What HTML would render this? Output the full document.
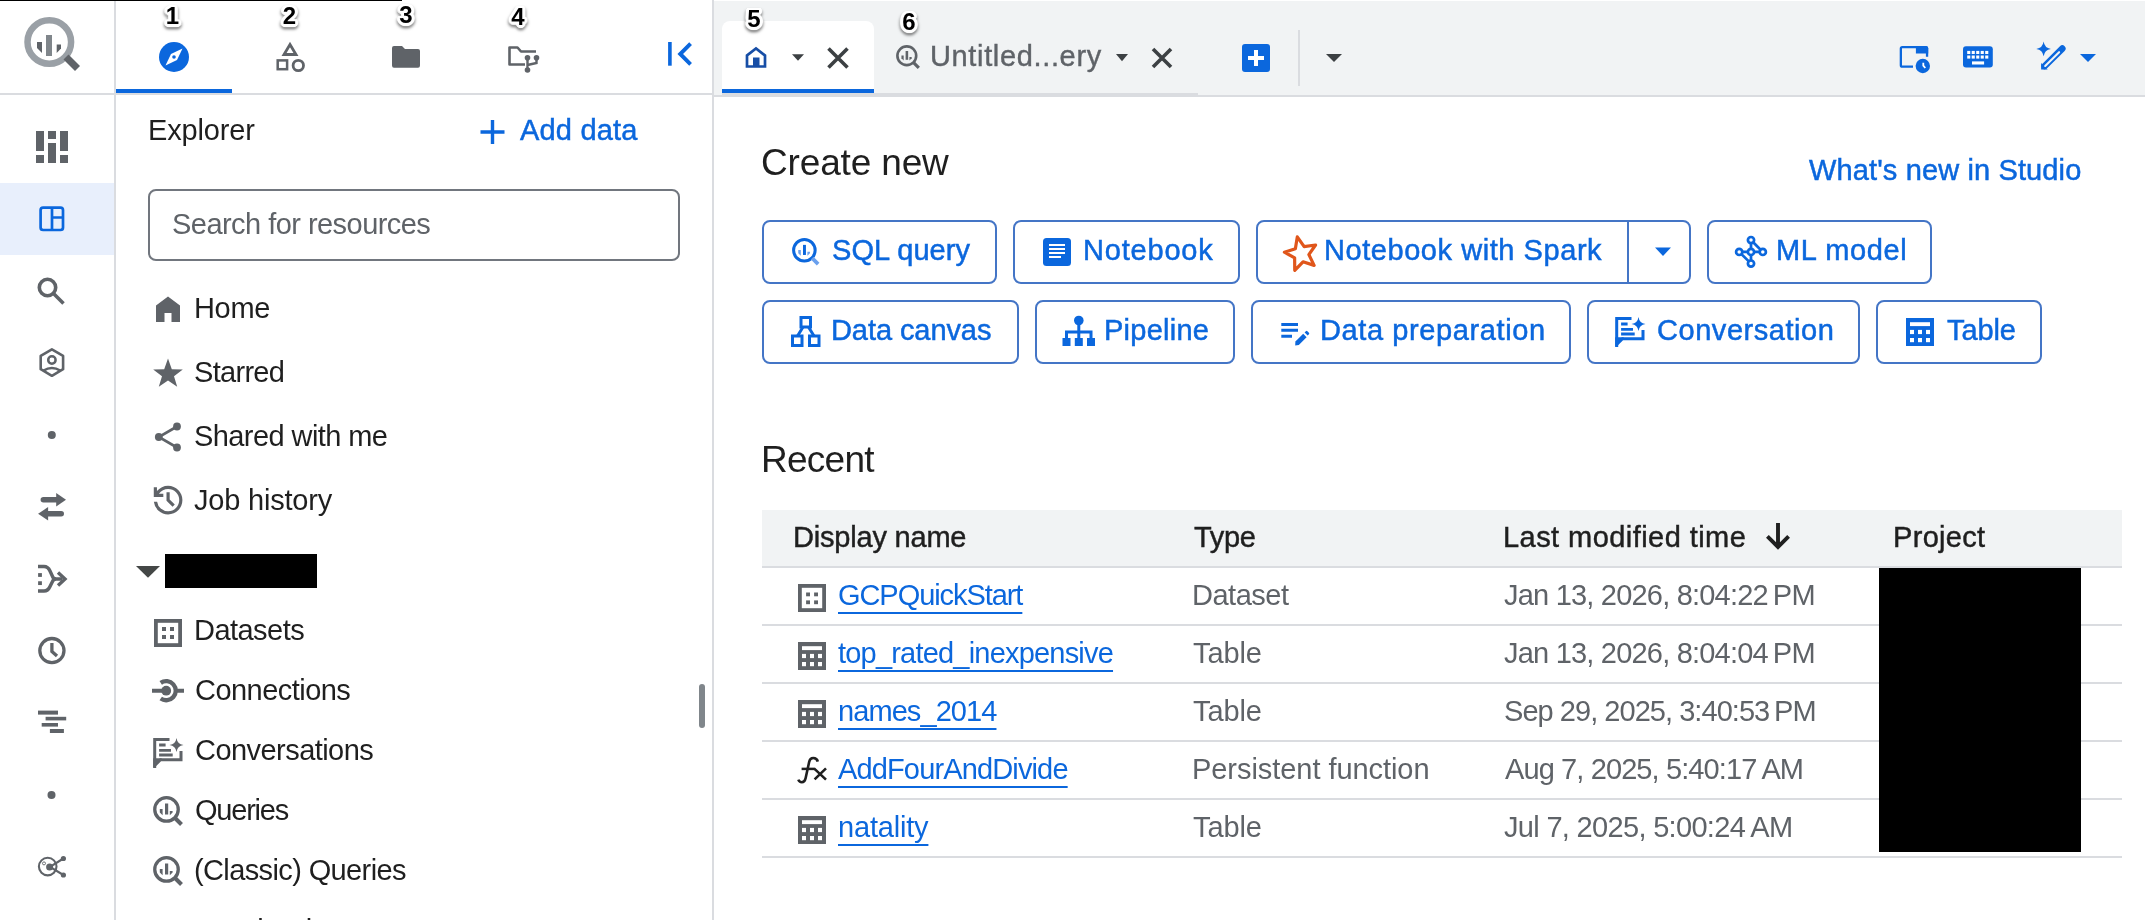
<!DOCTYPE html>
<html><head><meta charset="utf-8"><style>
html,body{margin:0;padding:0;background:#fff;width:2145px;height:920px;overflow:hidden;position:relative}
body{font-family:"Liberation Sans", sans-serif}
.t{position:absolute;white-space:nowrap;line-height:1;will-change:transform}
svg{overflow:visible}
.num{position:absolute;width:30px;text-align:center;font:bold 24px/1 "Liberation Sans", sans-serif;color:#000;
text-shadow:2.5px 0 0 #fff,-2.5px 0 0 #fff,0 2.5px 0 #fff,0 -2.5px 0 #fff,2px 2px 0 #fff,-2px 2px 0 #fff,2px -2px 0 #fff,-2px -2px 0 #fff,3px 1px 1px #fff,-3px 1px 1px #fff,1px 3px 1px #fff,-1px 3px 1px #fff,3px -1px 1px #fff,-3px -1px 1px #fff;
filter:drop-shadow(0 2.5px 1.5px rgba(0,0,0,.55))}
</style></head><body>
<div style="position:absolute;left:114px;top:0px;width:2px;height:920px;background:#dadce0"></div>
<div style="position:absolute;left:0px;top:93px;width:114px;height:2px;background:#dadce0"></div>
<div style="position:absolute;left:116px;top:93px;width:596px;height:2px;background:#dadce0"></div>
<div style="position:absolute;left:0px;top:0px;width:402px;height:1px;background:#000"></div>
<svg style="position:absolute;left:20px;top:13px;" width="64" height="64" viewBox="0 0 64 64">
<circle cx="29.3" cy="29" r="21.8" fill="none" stroke="#9aa0a6" stroke-width="6.5"/>
<path d="M17 29 h5 v11 l-5 -5 z" fill="#5f6368"/>
<rect x="26" y="22" width="6" height="21" fill="#80868b"/>
<path d="M36.7 31.6 h4.3 v4 l-4.3 4.5 z" fill="#5f6368"/>
<path d="M43.5 46.5 l5 -5 l11.5 11.5 l-5 5 z" fill="#5f6368"/>
</svg>
<svg style="position:absolute;left:36px;top:131px;" width="32" height="32" viewBox="0 0 32 32">
<rect x="0" y="0" width="8" height="20" fill="#5f6368"/>
<rect x="0" y="24" width="8" height="8" fill="#5f6368"/>
<rect x="12" y="0" width="8" height="8" fill="#5f6368"/>
<rect x="12" y="12" width="8" height="20" fill="#5f6368"/>
<rect x="24" y="0" width="8" height="20" fill="#5f6368"/>
<rect x="24" y="24" width="8" height="8" fill="#5f6368"/>
</svg>
<div style="position:absolute;left:0px;top:183px;width:114px;height:72px;background:#e8effc"></div>
<svg style="position:absolute;left:38px;top:205px;" width="28" height="28" viewBox="0 0 28 28">
<rect x="2.6" y="2.6" width="22.4" height="22.4" rx="2.5" fill="none" stroke="#0b67dd" stroke-width="2.7"/>
<path d="M14 2.6 V25 M14 12.5 H25" stroke="#0b67dd" stroke-width="2.7"/>
</svg>
<svg style="position:absolute;left:36px;top:276px;" width="30" height="30" viewBox="0 0 30 30">
<circle cx="11.5" cy="11.5" r="8.2" fill="none" stroke="#5f6368" stroke-width="3.6"/>
<path d="M17.5 17.5 L27.5 27.5" stroke="#5f6368" stroke-width="3.6"/>
</svg>
<svg style="position:absolute;left:38px;top:347px;" width="28" height="32" viewBox="0 0 28 32">
<path d="M13.9 2.4 L25.1 8.9 V22.2 L13.9 28.8 L2.7 22.2 V8.9 Z" fill="none" stroke="#5f6368" stroke-width="2.6" stroke-linejoin="round"/>
<circle cx="13.9" cy="13" r="3.7" fill="none" stroke="#5f6368" stroke-width="2.5"/>
<path d="M5.5 23.6 Q13.9 18.6 22.3 23.6" fill="none" stroke="#5f6368" stroke-width="2.5"/>
</svg>
<svg style="position:absolute;left:47px;top:430px;" width="10" height="10" viewBox="0 0 10 10"><circle cx="4.8" cy="5" r="4" fill="#5f6368"/></svg>
<svg style="position:absolute;left:47px;top:790px;" width="10" height="10" viewBox="0 0 10 10"><circle cx="4.5" cy="5" r="4" fill="#5f6368"/></svg>
<svg style="position:absolute;left:36px;top:490px;" width="32" height="32" viewBox="0 0 32 32">
<path d="M7.4 9.75 H21" stroke="#5f6368" stroke-width="5.6" stroke-linecap="round"/>
<path d="M20.2 3.1 L30 9.75 L20.2 16.4 Z" fill="#5f6368"/>
<path d="M11 23.75 H25.2" stroke="#5f6368" stroke-width="5.6" stroke-linecap="round"/>
<path d="M12.1 17.1 L2.1 23.75 L12.1 30.4 Z" fill="#5f6368"/>
</svg>
<svg style="position:absolute;left:36px;top:563px;" width="32" height="32" viewBox="0 0 32 32">
<path d="M2 3.5 H8 Q12 3.5 14 8 L17 14.5 Q18.5 16 20 16 H26" fill="none" stroke="#5f6368" stroke-width="3.4"/>
<path d="M2 28 H8 Q12 28 14 23.5 L17 17.5 Q18.5 16 20 16" fill="none" stroke="#5f6368" stroke-width="3.4"/>
<rect x="2.1" y="10.1" width="3.8" height="3.8" fill="#5f6368"/>
<rect x="2.1" y="18.25" width="3.8" height="3.8" fill="#5f6368"/>
<path d="M22 9.5 L29 16 L22 22.5" fill="none" stroke="#5f6368" stroke-width="3.4"/>
</svg>
<svg style="position:absolute;left:36px;top:635px;" width="32" height="32" viewBox="0 0 32 32">
<circle cx="15.9" cy="15.6" r="12.1" fill="none" stroke="#5f6368" stroke-width="3.3"/>
<path d="M15.9 8.1 V16.4 L21 21" fill="none" stroke="#5f6368" stroke-width="3.3"/>
</svg>
<svg style="position:absolute;left:36px;top:709px;" width="32" height="28" viewBox="0 0 32 28">
<rect x="2" y="1.6" width="20" height="4" fill="#5f6368"/>
<rect x="9.6" y="7.8" width="20.6" height="3.6" fill="#5f6368"/>
<rect x="5.7" y="14" width="16.3" height="3.6" fill="#5f6368"/>
<rect x="13.9" y="20" width="14" height="4" fill="#5f6368"/>
</svg>
<svg style="position:absolute;left:36px;top:853px;" width="32" height="28" viewBox="0 0 32 28">
<circle cx="11.7" cy="13.6" r="8.8" fill="none" stroke="#5f6368" stroke-width="2.1"/>
<circle cx="13.6" cy="13.9" r="3.5" fill="#5f6368"/>
<path d="M14 13.9 L27.4 5.5 M14 13.9 L27.4 22" stroke="#5f6368" stroke-width="2.2"/>
<circle cx="27.4" cy="5.5" r="2.6" fill="#5f6368"/>
<circle cx="27.4" cy="22" r="2.6" fill="#5f6368"/>
<circle cx="8" cy="10.4" r="1.5" fill="none" stroke="#5f6368" stroke-width="0.9"/>
</svg>
<div style="position:absolute;left:712px;top:0px;width:2px;height:920px;background:#dadce0"></div>
<div style="position:absolute;left:116px;top:89px;width:116px;height:4px;background:#0b67dd"></div>
<svg style="position:absolute;left:158px;top:41px;" width="32" height="32" viewBox="0 0 32 32">
<circle cx="16" cy="16" r="15" fill="#0b67dd"/>
<path d="M24.5 7.5 L13 13 L7.5 24.5 L19 19 Z" fill="#fff"/>
<circle cx="16" cy="16" r="1.8" fill="#0b67dd"/>
</svg>
<svg style="position:absolute;left:274px;top:40px;" width="32" height="34" viewBox="0 0 32 34">
<path d="M16 4.5 L22 14.5 H10 Z" fill="none" stroke="#5f6368" stroke-width="2.8" stroke-linejoin="miter"/>
<rect x="3.7" y="20.4" width="9.4" height="8.8" fill="none" stroke="#5f6368" stroke-width="2.5"/>
<circle cx="24.3" cy="25.5" r="5.2" fill="none" stroke="#5f6368" stroke-width="2.8"/>
</svg>
<svg style="position:absolute;left:390px;top:44px;" width="32" height="26" viewBox="0 0 32 26">
<path d="M2 4 Q2 2 4 2 H12 L15 5 H28 Q30 5 30 7 V21.5 Q30 23.7 28 23.7 H4 Q2 23.7 2 21.5 Z" fill="#5f6368"/>
</svg>
<svg style="position:absolute;left:506px;top:44px;" width="36" height="30" viewBox="0 0 36 30">
<path d="M19 20.5 H3.5 V3.5 H11.5 L15 7.5 H30" fill="none" stroke="#5f6368" stroke-width="2.6" stroke-linejoin="round"/>
<circle cx="21.5" cy="13.8" r="2.8" fill="#5f6368"/>
<circle cx="30.5" cy="13.8" r="2.8" fill="#5f6368"/>
<circle cx="21.5" cy="26" r="2.8" fill="#5f6368"/>
<path d="M21.5 14 V26 M30.5 14 V19 L21.5 21" fill="none" stroke="#5f6368" stroke-width="2.4"/>
</svg>
<svg style="position:absolute;left:664px;top:40px;" width="32" height="28" viewBox="0 0 32 28">
<rect x="4.1" y="2" width="3.6" height="23.7" fill="#0b67dd"/>
<path d="M26.6 3.6 L16.2 14 L26.6 24.4" fill="none" stroke="#0b67dd" stroke-width="3.9"/>
</svg>
<div class="t" style="left:148px;top:116.00px;font-size:29px;color:#1f1f1f;letter-spacing:-0.143px;font-weight:400;">Explorer</div>
<svg style="position:absolute;left:478px;top:118px;" width="30" height="28" viewBox="0 0 30 28"><path d="M14.5 2 V26 M2.5 14 H26.5" stroke="#0b67dd" stroke-width="3.4"/></svg>
<div class="t" style="left:520px;top:116.00px;font-size:29px;color:#0b67dd;letter-spacing:0.186px;font-weight:400;-webkit-text-stroke:0.5px #0b67dd">Add data</div>
<div style="position:absolute;left:148px;top:189px;width:532px;height:72px;box-sizing:border-box;border:2px solid #71767e;border-radius:8px"></div>
<div class="t" style="left:172px;top:210.30px;font-size:29px;color:#5f6368;letter-spacing:-0.542px;font-weight:400;">Search for resources</div>
<svg style="position:absolute;left:154px;top:294px;" width="28" height="30" viewBox="0 0 28 30"><path d="M2 28 V11.5 L14 2.5 L26 11.5 V28 H17.5 V19 H10.5 V28 Z" fill="#5f6368"/></svg>
<div class="t" style="left:193.5px;top:294.00px;font-size:29px;color:#1f1f1f;letter-spacing:-0.333px;font-weight:400;">Home</div>
<svg style="position:absolute;left:152px;top:357px;" width="32" height="32" viewBox="0 0 32 32"><path d="M16 1.5 L19.8 12.2 L30.8 12.4 L22 19.3 L25.2 29.8 L16 23.5 L6.8 29.8 L10 19.3 L1.2 12.4 L12.2 12.2 Z" fill="#5f6368"/></svg>
<div class="t" style="left:194.3px;top:358.00px;font-size:29px;color:#1f1f1f;letter-spacing:-0.700px;font-weight:400;">Starred</div>
<svg style="position:absolute;left:152px;top:420px;" width="32" height="34" viewBox="0 0 32 34">
<circle cx="25" cy="6.5" r="3.9" fill="#5f6368"/>
<circle cx="6.8" cy="17" r="3.9" fill="#5f6368"/>
<circle cx="25" cy="27.5" r="3.9" fill="#5f6368"/>
<path d="M25 6.5 L6.8 17 L25 27.5" fill="none" stroke="#5f6368" stroke-width="2.6"/>
</svg>
<div class="t" style="left:193.8px;top:422.20px;font-size:29px;color:#1f1f1f;letter-spacing:-0.577px;font-weight:400;">Shared with me</div>
<svg style="position:absolute;left:148.9px;top:481.3px;" width="38.2" height="38.2" viewBox="0 -960 960 960"><path fill="#5f6368" d="M480-120q-138 0-240.5-91.5T122-440h82q14 104 92.5 172T480-200q117 0 198.5-81.5T760-480q0-117-81.5-198.5T480-760q-69 0-129 32t-101 88h110v80H120v-240h80v94q51-64 124.5-99T480-840q75 0 140.5 28.5t114 77q48.5 48.5 77 114T840-480q0 75-28.5 140.5t-77 114q-48.5 48.5-114 77T480-120Zm112-192L440-464v-216h80v184l128 128-56 56Z"/></svg>
<div class="t" style="left:193.8px;top:486.20px;font-size:29px;color:#1f1f1f;letter-spacing:-0.200px;font-weight:400;">Job history</div>
<svg style="position:absolute;left:136px;top:562px;" width="26" height="20" viewBox="0 0 26 20"><path d="M0 4.1 H24 L12 15.8 Z" fill="#444746"/></svg>
<div style="position:absolute;left:165px;top:554px;width:152px;height:34px;background:#000"></div>
<svg style="position:absolute;left:152px;top:617px;" width="32" height="32" viewBox="0 0 32 32">
<rect x="3.9" y="3.9" width="24.2" height="24.2" fill="none" stroke="#5f6368" stroke-width="3.8"/>
<rect x="10" y="10" width="4" height="4" fill="#5f6368"/>
<rect x="18" y="10" width="4" height="4" fill="#5f6368"/>
<rect x="10" y="18" width="4" height="4" fill="#5f6368"/>
<rect x="18" y="18" width="4" height="4" fill="#5f6368"/>
</svg>
<div class="t" style="left:193.6px;top:616.10px;font-size:29px;color:#1f1f1f;letter-spacing:-0.543px;font-weight:400;">Datasets</div>
<svg style="position:absolute;left:150px;top:676px;" width="36" height="30" viewBox="0 0 36 30">
<path d="M2 14.7 H12 M25 14.7 H34" stroke="#5f6368" stroke-width="4"/>
<circle cx="16.2" cy="14.7" r="4.9" fill="#5f6368"/>
<path d="M10.72 6.88 A9.55 9.55 0 1 1 10.72 22.52" fill="none" stroke="#5f6368" stroke-width="4.3"/>
</svg>
<div class="t" style="left:194.6px;top:676.20px;font-size:29px;color:#1f1f1f;letter-spacing:-0.540px;font-weight:400;">Connections</div>
<svg style="position:absolute;left:152px;top:736px;" width="34" height="34" viewBox="0 0 34 34">
<path d="M2.7 32 V3.5 H17.5" fill="none" stroke="#5f6368" stroke-width="3"/>
<path d="M2.7 29.5 L8.5 23.7 H29 V15" fill="none" stroke="#5f6368" stroke-width="3"/>
<path d="M1.2 32 V22.2 H10 Z" fill="#5f6368"/>
<path d="M7.1 9 H13.6 M7.1 14.4 H19 M7.1 19 H20.7" stroke="#5f6368" stroke-width="2.8"/>
<path d="M24.5 2 Q25.3 8.2 31.5 9 Q25.3 9.8 24.5 16 Q23.7 9.8 17.5 9 Q23.7 8.2 24.5 2 Z" fill="#5f6368"/>
</svg>
<div class="t" style="left:194.6px;top:735.50px;font-size:29px;color:#1f1f1f;letter-spacing:-0.550px;font-weight:400;">Conversations</div>
<svg style="position:absolute;left:153px;top:796px;" width="30" height="30" viewBox="0 0 30 30">
<circle cx="13.5" cy="13.4" r="11.75" fill="none" stroke="#5f6368" stroke-width="3.3"/>
<rect x="12" y="7.5" width="3.2" height="11" fill="#5f6368"/>
<path d="M6.8 13 h2.8 v6.3 l-2.8 -2.8 z" fill="#5f6368"/>
<path d="M16.8 15 h2.8 v1.5 l-2.8 2.8 z" fill="#5f6368"/>
<path d="M22 22 L28.5 28.5" stroke="#5f6368" stroke-width="4"/>
</svg>
<div class="t" style="left:194.5px;top:795.80px;font-size:29px;color:#1f1f1f;letter-spacing:-1.217px;font-weight:400;">Queries</div>
<svg style="position:absolute;left:153px;top:856px;" width="30" height="30" viewBox="0 0 30 30">
<circle cx="13.5" cy="13.4" r="11.75" fill="none" stroke="#5f6368" stroke-width="3.3"/>
<rect x="12" y="7.5" width="3.2" height="11" fill="#5f6368"/>
<path d="M6.8 13 h2.8 v6.3 l-2.8 -2.8 z" fill="#5f6368"/>
<path d="M16.8 15 h2.8 v1.5 l-2.8 2.8 z" fill="#5f6368"/>
<path d="M22 22 L28.5 28.5" stroke="#5f6368" stroke-width="4"/>
</svg>
<div class="t" style="left:193.9px;top:855.90px;font-size:29px;color:#1f1f1f;letter-spacing:-0.619px;font-weight:400;">(Classic) Queries</div>
<div class="t" style="left:195.6px;top:916.00px;font-size:29px;color:#1f1f1f;letter-spacing:0.000px;font-weight:400;">Notebooks</div>
<div style="position:absolute;left:699px;top:684px;width:6px;height:44px;background:#80868b;border-radius:3px"></div>
<div style="position:absolute;left:714px;top:1px;width:1431px;height:94px;background:#f1f3f4"></div>
<div style="position:absolute;left:714px;top:95px;width:1431px;height:2px;background:#dadce0"></div>
<div style="position:absolute;left:722px;top:93px;width:476px;height:4px;background:#dadce0"></div>
<div style="position:absolute;left:722px;top:21px;width:152px;height:72px;background:#fff;border-radius:8px 8px 0 0"></div>
<div style="position:absolute;left:722px;top:89px;width:152px;height:4px;background:#0b67dd"></div>
<svg style="position:absolute;left:744px;top:44px;" width="24" height="26" viewBox="0 0 24 26">
<path d="M3 22.5 V11.5 L12 4.5 L21 11.5 V22.5 Z" fill="none" stroke="#174ea6" stroke-width="2.7"/>
<rect x="9" y="13.5" width="6.5" height="9" fill="#174ea6"/>
</svg>
<svg style="position:absolute;left:790px;top:52px;" width="16" height="12" viewBox="0 0 16 12"><path d="M2 2.2 H14 L8 8.8 Z" fill="#3c4043"/></svg>
<svg style="position:absolute;left:825px;top:45px;" width="26" height="26" viewBox="0 0 26 26"><path d="M3.5 3.5 L22.5 22.5 M22.5 3.5 L3.5 22.5" stroke="#3c4043" stroke-width="3.6"/></svg>
<svg style="position:absolute;left:896px;top:45px;" width="24" height="24" viewBox="0 0 30 30">
<circle cx="13.5" cy="13.4" r="11.75" fill="none" stroke="#5f6368" stroke-width="3.3"/>
<rect x="12" y="7.5" width="3.2" height="11" fill="#5f6368"/>
<path d="M6.8 13 h2.8 v6.3 l-2.8 -2.8 z" fill="#5f6368"/>
<path d="M16.8 15 h2.8 v1.5 l-2.8 2.8 z" fill="#5f6368"/>
<path d="M22 22 L28.5 28.5" stroke="#5f6368" stroke-width="4"/>
</svg>
<div class="t" style="left:929.5px;top:42.10px;font-size:29px;color:#5f6368;letter-spacing:0.646px;font-weight:400;-webkit-text-stroke:0.4px #5f6368">Untitled...ery</div>
<svg style="position:absolute;left:1114px;top:51px;" width="16" height="12" viewBox="0 0 16 12"><path d="M2 2.9 H14 L8 10.3 Z" fill="#3c4043"/></svg>
<svg style="position:absolute;left:1149px;top:45px;" width="26" height="26" viewBox="0 0 26 26"><path d="M4 4 L22 22 M22 4 L4 22" stroke="#3c4043" stroke-width="3.6"/></svg>
<div style="position:absolute;left:1242px;top:44px;width:28px;height:28px;background:#0b67dd;border-radius:3px"></div>
<svg style="position:absolute;left:1242px;top:44px;" width="28" height="28" viewBox="0 0 28 28"><path d="M14 6 V22 M6 14 H22" stroke="#fff" stroke-width="4"/></svg>
<div style="position:absolute;left:1298px;top:30px;width:2px;height:56px;background:#dadce0"></div>
<svg style="position:absolute;left:1324px;top:50px;" width="20" height="16" viewBox="0 0 20 16"><path d="M2 4 H18 L10 12 Z" fill="#3c4043"/></svg>
<svg style="position:absolute;left:1897px;top:43px;" width="36" height="34" viewBox="0 0 36 34">
<path d="M16 23.65 H5.3 Q3.85 23.65 3.85 22.2 V5.6 Q3.85 4.15 5.3 4.15 H28.6 Q30.05 4.15 30.05 5.6 V13.8" fill="none" stroke="#0b67dd" stroke-width="2.3"/>
<path d="M18.9 3 H29 Q31.2 3 31.2 5.2 V10.5 H18.9 Z" fill="#0b67dd"/>
<circle cx="25.8" cy="23" r="7.2" fill="#0b67dd"/>
<path d="M26.3 19.7 V22.6 L28.3 25" fill="none" stroke="#fff" stroke-width="1.8"/>
</svg>
<svg style="position:absolute;left:1961px;top:44px;" width="34" height="26" viewBox="0 0 34 26">
<rect x="2" y="2.3" width="29.8" height="21.3" rx="3" fill="#0b67dd"/>
<g fill="#fff"><rect x="6.2" y="6.9" width="3.1" height="3.1"/><rect x="10.7" y="6.9" width="3.1" height="3.1"/><rect x="15.2" y="6.9" width="3.1" height="3.1"/><rect x="19.7" y="6.9" width="3.1" height="3.1"/><rect x="24.2" y="6.9" width="3.1" height="3.1"/><rect x="6.2" y="11.5" width="3.1" height="3.1"/><rect x="10.7" y="11.5" width="3.1" height="3.1"/><rect x="15.2" y="11.5" width="3.1" height="3.1"/><rect x="19.7" y="11.5" width="3.1" height="3.1"/><rect x="24.2" y="11.5" width="3.1" height="3.1"/>
<rect x="11" y="17.4" width="12.1" height="3.1"/></g>
</svg>
<svg style="position:absolute;left:2034px;top:39px;" width="36" height="34" viewBox="0 0 36 34">
<path d="M9.6 2.5 Q10.5 9 16.9 9.9 Q10.5 10.8 9.6 17.3 Q8.7 10.8 2.3 9.9 Q8.7 9 9.6 2.5 Z" fill="#0b67dd"/>
<path d="M10.8 27 L28.3 9.6" stroke="#0b67dd" stroke-width="6.6" stroke-linecap="round"/>
<path d="M7.1 24 V30.6 H13.7 Z" fill="#0b67dd"/>
<path d="M11.2 27 L25.1 13.2" stroke="#f1f3f4" stroke-width="2.1" stroke-linecap="round"/>
</svg>
<svg style="position:absolute;left:2078px;top:51px;" width="20" height="14" viewBox="0 0 20 14"><path d="M2 3 H18 L10 11 Z" fill="#0b67dd"/></svg>
<div class="num" style="left:157.5px;top:3.5px">1</div>
<div class="num" style="left:274.5px;top:3.5px">2</div>
<div class="num" style="left:391px;top:3px">3</div>
<div class="num" style="left:503px;top:5px">4</div>
<div class="num" style="left:739px;top:7px">5</div>
<div class="num" style="left:894px;top:10.2px">6</div>
<div class="t" style="left:761.2px;top:144.00px;font-size:37px;color:#1f1f1f;letter-spacing:-0.156px;font-weight:400;">Create new</div>
<div class="t" style="left:1809px;top:155.60px;font-size:29px;color:#0b67dd;letter-spacing:0.126px;font-weight:400;-webkit-text-stroke:0.5px #0b67dd">What's new in Studio</div>
<div style="position:absolute;left:762px;top:220px;width:235px;height:64px;box-sizing:border-box;border:2px solid #4475c6;border-radius:8px"></div>
<svg style="position:absolute;left:792.3px;top:238.3px;" width="27.5" height="27.5" viewBox="0 0 30 30">
<circle cx="13.5" cy="13.4" r="11.75" fill="none" stroke="#0b67dd" stroke-width="3.3"/>
<rect x="12" y="7.5" width="3.2" height="11" fill="#0b67dd"/>
<path d="M6.8 13 h2.8 v6.3 l-2.8 -2.8 z" fill="#6aa0ee"/>
<path d="M16.8 15 h2.8 v1.5 l-2.8 2.8 z" fill="#6aa0ee"/>
<path d="M22 22 L28.5 28.5" stroke="#6aa0ee" stroke-width="4"/>
</svg>
<div class="t" style="left:832px;top:235.80px;font-size:29px;color:#0b67dd;letter-spacing:0.050px;font-weight:400;-webkit-text-stroke:0.5px #0b67dd">SQL query</div>
<div style="position:absolute;left:1013px;top:220px;width:227px;height:64px;box-sizing:border-box;border:2px solid #4475c6;border-radius:8px"></div>
<svg style="position:absolute;left:1043px;top:238px;" width="28" height="28" viewBox="0 0 28 28"><rect x="0" y="0" width="28" height="28" rx="3.5" fill="#0b67dd"/>
<path d="M6 7 H22 M6 11 H22 M6 15 H22 M6 19 H18" stroke="#fff" stroke-width="2"/></svg>
<div class="t" style="left:1083px;top:236.30px;font-size:29px;color:#0b67dd;letter-spacing:0.800px;font-weight:400;-webkit-text-stroke:0.5px #0b67dd">Notebook</div>
<div style="position:absolute;left:1256px;top:220px;width:435px;height:64px;box-sizing:border-box;border:2px solid #4475c6;border-radius:8px"></div>
<div style="position:absolute;left:1627px;top:220px;width:2px;height:64px;background:#4475c6"></div>
<svg style="position:absolute;left:1280.7px;top:232.5px;" width="40" height="40" viewBox="0 0 40 40"><path transform="rotate(-13 20 20)" d="M20 3.5 L24.5 14.5 L36 15.5 L27.3 23.3 L30 35 L20 29 L10 35.5 L12.7 23.3 L4 15.5 L15.5 14.5 Z" fill="none" stroke="#e0561b" stroke-width="3.2" stroke-linejoin="round"/></svg>
<div class="t" style="left:1324px;top:236.30px;font-size:29px;color:#0b67dd;letter-spacing:0.556px;font-weight:400;-webkit-text-stroke:0.5px #0b67dd">Notebook with Spark</div>
<svg style="position:absolute;left:1652px;top:244px;" width="22" height="16" viewBox="0 0 22 16"><path d="M3 3.4 H19 L11 12 Z" fill="#0b67dd"/></svg>
<div style="position:absolute;left:1707px;top:220px;width:225px;height:64px;box-sizing:border-box;border:2px solid #4475c6;border-radius:8px"></div>
<svg style="position:absolute;left:1732px;top:234px;" width="38" height="36" viewBox="0 0 38 36">
<g fill="none" stroke="#0b67dd" stroke-width="2.7">
<circle cx="19" cy="6.1" r="3.1"/><circle cx="7.2" cy="17.9" r="3.1"/><circle cx="19" cy="17.9" r="3.1"/><circle cx="30.8" cy="17.9" r="3.1"/><circle cx="19" cy="29.6" r="3.1"/>
<path d="M19 9.2 V14.8 M19 21 V26.5 M10.3 17.9 H15.9 M22.1 17.9 H27.7 M21.2 8.3 L28.6 15.7 M9.4 20.1 L16.8 27.4"/>
</g></svg>
<div class="t" style="left:1776px;top:236.30px;font-size:29px;color:#0b67dd;letter-spacing:0.643px;font-weight:400;-webkit-text-stroke:0.5px #0b67dd">ML model</div>
<div style="position:absolute;left:762px;top:300px;width:257px;height:64px;box-sizing:border-box;border:2px solid #4475c6;border-radius:8px"></div>
<svg style="position:absolute;left:789px;top:314px;" width="34" height="34" viewBox="0 0 34 34">
<g fill="none" stroke="#0b67dd" stroke-width="3">
<rect x="12" y="3.5" width="9.5" height="9.5"/><rect x="3.5" y="22" width="9.5" height="9.5"/><rect x="20.5" y="22" width="9.5" height="9.5"/>
<path d="M14 13 L8.5 22 M19.5 13 L25 22"/></g></svg>
<div class="t" style="left:831.3px;top:316.00px;font-size:29px;color:#0b67dd;letter-spacing:-0.080px;font-weight:400;-webkit-text-stroke:0.5px #0b67dd">Data canvas</div>
<div style="position:absolute;left:1035px;top:300px;width:200px;height:64px;box-sizing:border-box;border:2px solid #4475c6;border-radius:8px"></div>
<svg style="position:absolute;left:1060px;top:314px;" width="38" height="34" viewBox="0 0 38 34">
<circle cx="18.8" cy="6.5" r="4.8" fill="#0b67dd"/>
<path d="M18.8 8 V25 M6.5 25 V18 H31 V25" fill="none" stroke="#0b67dd" stroke-width="3"/>
<rect x="2.5" y="24" width="8" height="8" fill="#0b67dd"/><rect x="14.8" y="24" width="8" height="8" fill="#0b67dd"/><rect x="27" y="24" width="8" height="8" fill="#0b67dd"/>
</svg>
<div class="t" style="left:1104px;top:316.00px;font-size:29px;color:#0b67dd;letter-spacing:0.257px;font-weight:400;-webkit-text-stroke:0.5px #0b67dd">Pipeline</div>
<div style="position:absolute;left:1251px;top:300px;width:320px;height:64px;box-sizing:border-box;border:2px solid #4475c6;border-radius:8px"></div>
<svg style="position:absolute;left:1279px;top:320px;" width="32" height="28" viewBox="0 0 32 28">
<path d="M2.3 4.5 H19 M2.3 10.3 H19 M2.3 16.3 H13" stroke="#0b67dd" stroke-width="2.9"/>
<path d="M16.2 25.6 L16.4 21.6 L24.2 13.8 L27.6 17.2 L19.8 25 Z" fill="#0b67dd"/>
<path d="M25.6 12.4 L26.8 11.2 Q27.6 10.4 28.4 11.2 L29.9 12.7 Q30.7 13.5 29.9 14.3 L28.7 15.5 Z" fill="#0b67dd"/>
</svg>
<div class="t" style="left:1320.3px;top:316.00px;font-size:29px;color:#0b67dd;letter-spacing:0.600px;font-weight:400;-webkit-text-stroke:0.5px #0b67dd">Data preparation</div>
<div style="position:absolute;left:1587px;top:300px;width:273px;height:64px;box-sizing:border-box;border:2px solid #4475c6;border-radius:8px"></div>
<svg style="position:absolute;left:1614px;top:315px;" width="34" height="34" viewBox="0 0 34 34">
<path d="M2.7 32 V3.5 H17.5" fill="none" stroke="#0b67dd" stroke-width="3"/>
<path d="M2.7 29.5 L8.5 23.7 H29 V15" fill="none" stroke="#0b67dd" stroke-width="3"/>
<path d="M1.2 32 V22.2 H10 Z" fill="#0b67dd"/>
<path d="M7.1 9 H13.6 M7.1 14.4 H19 M7.1 19 H20.7" stroke="#0b67dd" stroke-width="2.8"/>
<path d="M24.5 2 Q25.3 8.2 31.5 9 Q25.3 9.8 24.5 16 Q23.7 9.8 17.5 9 Q23.7 8.2 24.5 2 Z" fill="#0b67dd"/>
</svg>
<div class="t" style="left:1657.3px;top:316.00px;font-size:29px;color:#0b67dd;letter-spacing:0.545px;font-weight:400;-webkit-text-stroke:0.5px #0b67dd">Conversation</div>
<div style="position:absolute;left:1876px;top:300px;width:166px;height:64px;box-sizing:border-box;border:2px solid #4475c6;border-radius:8px"></div>
<svg style="position:absolute;left:1906px;top:318px;" width="28" height="28" viewBox="0 0 28 28"><rect x="0" y="0" width="28" height="28" fill="#0b67dd"/>
<g fill="#fff"><rect x="4" y="4.2" width="20" height="3.9"/>
<rect x="4" y="11.9" width="4" height="4.2"/><rect x="12" y="11.9" width="4" height="4.2"/><rect x="20" y="11.9" width="4" height="4.2"/>
<rect x="4" y="20" width="4" height="4.2"/><rect x="12" y="20" width="4" height="4.2"/><rect x="20" y="20" width="4" height="4.2"/></g></svg>
<div class="t" style="left:1946.8px;top:316.00px;font-size:29px;color:#0b67dd;letter-spacing:-0.125px;font-weight:400;-webkit-text-stroke:0.5px #0b67dd">Table</div>
<div class="t" style="left:760.5px;top:441.40px;font-size:37px;color:#1f1f1f;letter-spacing:-0.740px;font-weight:400;">Recent</div>
<div style="position:absolute;left:762px;top:510px;width:1360px;height:56px;background:#f1f3f4"></div>
<div style="position:absolute;left:762px;top:566px;width:1360px;height:2px;background:#dadce0"></div>
<div style="position:absolute;left:762px;top:624px;width:1360px;height:2px;background:#dadce0"></div>
<div style="position:absolute;left:762px;top:682px;width:1360px;height:2px;background:#dadce0"></div>
<div style="position:absolute;left:762px;top:740px;width:1360px;height:2px;background:#dadce0"></div>
<div style="position:absolute;left:762px;top:798px;width:1360px;height:2px;background:#dadce0"></div>
<div style="position:absolute;left:762px;top:856px;width:1360px;height:2px;background:#dadce0"></div>
<div class="t" style="left:793.2px;top:523.00px;font-size:29px;color:#1f1f1f;letter-spacing:-0.200px;font-weight:400;-webkit-text-stroke:0.45px #1f1f1f">Display name</div>
<div class="t" style="left:1193.6px;top:523.00px;font-size:29px;color:#1f1f1f;letter-spacing:-0.300px;font-weight:400;-webkit-text-stroke:0.45px #1f1f1f">Type</div>
<div class="t" style="left:1502.6px;top:523.00px;font-size:29px;color:#1f1f1f;letter-spacing:0.441px;font-weight:400;-webkit-text-stroke:0.45px #1f1f1f">Last modified time</div>
<svg style="position:absolute;left:1764px;top:523px;" width="28" height="30" viewBox="0 0 28 30"><path d="M14 0.1 V22 M3.4 13.3 L14 23.9 L24.6 13.3" fill="none" stroke="#1f1f1f" stroke-width="3.9"/></svg>
<div class="t" style="left:1892.7px;top:523.00px;font-size:29px;color:#1f1f1f;letter-spacing:0.317px;font-weight:400;-webkit-text-stroke:0.45px #1f1f1f">Project</div>
<svg style="position:absolute;left:798px;top:583.7px;" width="28" height="28" viewBox="0 0 28 28">
<rect x="1.9" y="1.9" width="24.2" height="24.2" fill="none" stroke="#5f6368" stroke-width="3.8"/>
<rect x="8.1" y="8.5" width="3.9" height="3.8" fill="#5f6368"/><rect x="16.1" y="8.5" width="3.9" height="3.8" fill="#5f6368"/>
<rect x="8.1" y="16.4" width="3.9" height="3.8" fill="#5f6368"/><rect x="16.1" y="16.4" width="3.9" height="3.8" fill="#5f6368"/></svg>
<div class="t" style="left:838.3px;top:580.70px;font-size:29px;color:#0b67dd;letter-spacing:-1.067px;font-weight:400;text-decoration:underline;text-decoration-thickness:2px;text-underline-offset:7px">GCPQuickStart</div>
<div class="t" style="left:1191.6px;top:580.70px;font-size:29px;color:#5f6368;letter-spacing:-0.500px;font-weight:400;">Dataset</div>
<div class="t" style="left:1503.6px;top:580.70px;font-size:29px;color:#5f6368;letter-spacing:-0.796px;font-weight:400;">Jan 13, 2026, 8:04:22 PM</div>
<svg style="position:absolute;left:798px;top:641.7px;" width="28" height="28" viewBox="0 0 28 28"><rect x="0" y="0" width="28" height="28" fill="#5f6368"/>
<g fill="#fff"><rect x="4" y="4.2" width="20" height="3.9"/>
<rect x="4" y="11.9" width="4" height="4.2"/><rect x="12" y="11.9" width="4" height="4.2"/><rect x="20" y="11.9" width="4" height="4.2"/>
<rect x="4" y="20" width="4" height="4.2"/><rect x="12" y="20" width="4" height="4.2"/><rect x="20" y="20" width="4" height="4.2"/></g></svg>
<div class="t" style="left:838.3px;top:638.70px;font-size:29px;color:#0b67dd;letter-spacing:-0.800px;font-weight:400;text-decoration:underline;text-decoration-thickness:2px;text-underline-offset:7px">top_rated_inexpensive</div>
<div class="t" style="left:1192.6px;top:638.70px;font-size:29px;color:#5f6368;letter-spacing:-0.100px;font-weight:400;">Table</div>
<div class="t" style="left:1503.6px;top:638.70px;font-size:29px;color:#5f6368;letter-spacing:-0.796px;font-weight:400;">Jan 13, 2026, 8:04:04 PM</div>
<svg style="position:absolute;left:798px;top:699.7px;" width="28" height="28" viewBox="0 0 28 28"><rect x="0" y="0" width="28" height="28" fill="#5f6368"/>
<g fill="#fff"><rect x="4" y="4.2" width="20" height="3.9"/>
<rect x="4" y="11.9" width="4" height="4.2"/><rect x="12" y="11.9" width="4" height="4.2"/><rect x="20" y="11.9" width="4" height="4.2"/>
<rect x="4" y="20" width="4" height="4.2"/><rect x="12" y="20" width="4" height="4.2"/><rect x="20" y="20" width="4" height="4.2"/></g></svg>
<div class="t" style="left:838.3px;top:696.70px;font-size:29px;color:#0b67dd;letter-spacing:-0.922px;font-weight:400;text-decoration:underline;text-decoration-thickness:2px;text-underline-offset:7px">names_2014</div>
<div class="t" style="left:1192.6px;top:696.70px;font-size:29px;color:#5f6368;letter-spacing:-0.100px;font-weight:400;">Table</div>
<div class="t" style="left:1503.6px;top:696.70px;font-size:29px;color:#5f6368;letter-spacing:-0.961px;font-weight:400;">Sep 29, 2025, 3:40:53 PM</div>
<svg style="position:absolute;left:798px;top:757.7px;" width="28" height="28" viewBox="0 0 28 28"><path d="M19.8 3.6 Q19 0 15.2 0 Q12 0 11.2 3.8 L7.6 20.2 Q6.7 24.2 3.8 24.2 Q1.3 24.2 0.3 21.6" fill="none" stroke="#1f1f1f" stroke-width="2.6"/>
<path d="M3.6 10.9 H16.6" stroke="#1f1f1f" stroke-width="2.5"/>
<path d="M16 10.4 L28 21.6 M28 10.4 L16.6 21.4" stroke="#1f1f1f" stroke-width="2.6"/></svg>
<div class="t" style="left:838.3px;top:754.70px;font-size:29px;color:#0b67dd;letter-spacing:-0.860px;font-weight:400;text-decoration:underline;text-decoration-thickness:2px;text-underline-offset:7px">AddFourAndDivide</div>
<div class="t" style="left:1191.6px;top:754.70px;font-size:29px;color:#5f6368;letter-spacing:-0.056px;font-weight:400;">Persistent function</div>
<div class="t" style="left:1504.6px;top:754.70px;font-size:29px;color:#5f6368;letter-spacing:-0.891px;font-weight:400;">Aug 7, 2025, 5:40:17 AM</div>
<svg style="position:absolute;left:798px;top:815.7px;" width="28" height="28" viewBox="0 0 28 28"><rect x="0" y="0" width="28" height="28" fill="#5f6368"/>
<g fill="#fff"><rect x="4" y="4.2" width="20" height="3.9"/>
<rect x="4" y="11.9" width="4" height="4.2"/><rect x="12" y="11.9" width="4" height="4.2"/><rect x="20" y="11.9" width="4" height="4.2"/>
<rect x="4" y="20" width="4" height="4.2"/><rect x="12" y="20" width="4" height="4.2"/><rect x="20" y="20" width="4" height="4.2"/></g></svg>
<div class="t" style="left:838.3px;top:812.70px;font-size:29px;color:#0b67dd;letter-spacing:-0.186px;font-weight:400;text-decoration:underline;text-decoration-thickness:2px;text-underline-offset:7px">natality</div>
<div class="t" style="left:1192.6px;top:812.70px;font-size:29px;color:#5f6368;letter-spacing:-0.100px;font-weight:400;">Table</div>
<div class="t" style="left:1503.6px;top:812.70px;font-size:29px;color:#5f6368;letter-spacing:-0.682px;font-weight:400;">Jul 7, 2025, 5:00:24 AM</div>
<div style="position:absolute;left:1879px;top:568px;width:202px;height:284px;background:#000"></div>
</body></html>
